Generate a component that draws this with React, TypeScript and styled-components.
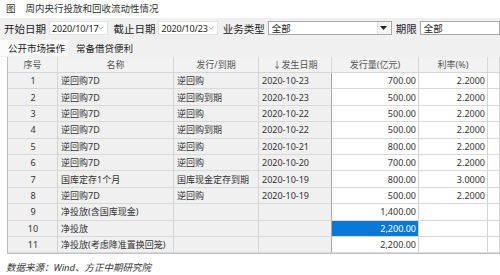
import React from 'react';
import styled, { createGlobalStyle } from 'styled-components';

const GlobalStyle = createGlobalStyle`
  html, body {
    margin: 0;
    padding: 0;
    background: #fff;
  }
  body {
    width: 500px;
    height: 275px;
    overflow: hidden;
    font-family: "Noto Sans", "Noto Sans CJK SC", sans-serif;
    color: #333;
  }
`;

const COLUMNS = '50px 116px 85px 73px 87px 69px 1fr';

const Page = styled.div`
  display: flex;
  flex-direction: column;
  width: 500px;
`;

const Title = styled.div`
  height: 18px;
  display: flex;
  align-items: center;
  gap: 10px;
  padding-left: 6px;
  padding-bottom: 3px;
  box-sizing: border-box;
  font-size: 9.5px;
  color: #333;
`;

const Toolbar = styled.div`
  height: 20px;
  display: flex;
  align-items: center;
  background: #f0f0f0;
  padding-left: 4px;
  font-size: 10.5px;
  color: #222;
`;

const Label = styled.span`
  margin-right: 3px;
  white-space: nowrap;
`;

const DateBox = styled.div`
  width: 64px;
  height: 14px;
  box-sizing: border-box;
  background: #fff;
  border: 1px solid #e2e2e2;
  display: flex;
  align-items: center;
  justify-content: space-between;
  padding: 0 3px 0 2px;
  font-size: 9px;
  letter-spacing: -0.15px;
  margin-right: 5px;
  white-space: nowrap;
`;

const SelectBox = styled.div<{ $width: number }>`
  width: ${(p) => p.$width}px;
  height: 14px;
  box-sizing: border-box;
  background: #fff;
  border: 1px solid #a8a8a8;
  display: flex;
  align-items: center;
  font-size: 9.5px;
  margin-right: 4px;
  flex-shrink: 0;
`;

const SelectText = styled.span`
  flex: 1;
  padding-left: 3px;
`;

const DropButton = styled.span`
  width: 12px;
  height: 100%;
  display: flex;
  align-items: center;
  justify-content: center;
  background: #f4f4f4;
  border-left: 1px solid #e0e0e0;
  margin-right: 1px;
`;

const Tabs = styled.div`
  height: 19px;
  display: flex;
  align-items: center;
  background: #f0f0f0;
  font-size: 9.5px;
  color: #222;
`;

const Tab = styled.span<{ $active?: boolean }>`
  height: 16px;
  display: flex;
  align-items: center;
  padding: 0 3px 0 8px;
  background: ${(p) => (p.$active ? '#fbfbfb' : 'transparent')};
`;

const Grid = styled.div`
  margin-left: 7px;
  border-left: 1px solid #bdbdbd;
  border-bottom: 1px solid #c4c4c4;
  width: 493px;
  box-sizing: border-box;
`;

const HeaderRow = styled.div`
  display: grid;
  grid-template-columns: ${COLUMNS};
  height: 15px;
  background: #f2f2f2;
  border-bottom: 1px solid #d6d6d6;
  font-size: 9px;
  color: #555;
`;

const HeadCell = styled.div`
  display: flex;
  align-items: center;
  justify-content: center;
  border-right: 1px solid #d8d8d8;
  white-space: nowrap;
`;

const Row = styled.div`
  display: grid;
  grid-template-columns: ${COLUMNS};
  height: 16.4px;
  font-size: 9px;
  color: #333;
`;

type Align = 'left' | 'center' | 'right';

const Cell = styled.div<{ $align?: Align; $kind?: 'gray' | 'white' | 'selected'; $edge?: string }>`
  display: flex;
  align-items: center;
  justify-content: ${(p) =>
    p.$align === 'center' ? 'center' : p.$align === 'right' ? 'flex-end' : 'flex-start'};
  padding: 0 2px 0 3px;
  background: ${(p) =>
    p.$kind === 'selected' ? '#0a78d6' : p.$kind === 'white' ? '#fff' : '#f0f0f0'};
  color: ${(p) => (p.$kind === 'selected' ? '#fff' : 'inherit')};
  border-right: 1px solid ${(p) => p.$edge ?? '#d4d4d4'};
  border-bottom: 1px solid #d9d9d9;
  white-space: nowrap;
  overflow: hidden;
`;

const Footnote = styled.div`
  padding: 6px 0 0 6px;
  font-size: 9.5px;
  font-style: italic;
  color: #333;
`;

const Chevron = () => (
  <svg width="6" height="4" viewBox="0 0 6 4">
    <path d="M0.5 0.8 L3 3.2 L5.5 0.8" fill="none" stroke="#999" strokeWidth="0.9" />
  </svg>
);

const Triangle = () => (
  <svg width="7" height="4" viewBox="0 0 7 4">
    <path d="M0 0 H7 L3.5 4 Z" fill="#222" />
  </svg>
);

interface Operation {
  no: number;
  name: string;
  kind: string;
  date: string;
  amount: string;
  rate: string;
  selected?: boolean;
}

const rows: Operation[] = [
  { no: 1, name: '逆回购7D', kind: '逆回购', date: '2020-10-23', amount: '700.00', rate: '2.2000' },
  { no: 2, name: '逆回购7D', kind: '逆回购到期', date: '2020-10-23', amount: '500.00', rate: '2.2000' },
  { no: 3, name: '逆回购7D', kind: '逆回购', date: '2020-10-22', amount: '500.00', rate: '2.2000' },
  { no: 4, name: '逆回购7D', kind: '逆回购到期', date: '2020-10-22', amount: '500.00', rate: '2.2000' },
  { no: 5, name: '逆回购7D', kind: '逆回购', date: '2020-10-21', amount: '800.00', rate: '2.2000' },
  { no: 6, name: '逆回购7D', kind: '逆回购', date: '2020-10-20', amount: '700.00', rate: '2.2000' },
  { no: 7, name: '国库定存1个月', kind: '国库现金定存到期', date: '2020-10-19', amount: '800.00', rate: '3.0000' },
  { no: 8, name: '逆回购7D', kind: '逆回购', date: '2020-10-19', amount: '500.00', rate: '2.2000' },
  { no: 9, name: '净投放(含国库现金)', kind: '', date: '', amount: '1,400.00', rate: '' },
  { no: 10, name: '净投放', kind: '', date: '', amount: '2,200.00', rate: '', selected: true },
  { no: 11, name: '净投放(考虑降准置换回笼)', kind: '', date: '', amount: '2,200.00', rate: '' },
];

const headers = ['序号', '名称', '发行/到期', '↓发生日期', '发行量(亿元)', '利率(%)', ''];

export default function App() {
  return (
    <Page>
      <GlobalStyle />
      <Title>
        <span>图</span>
        <span>周内央行投放和回收流动性情况</span>
      </Title>
      <Toolbar>
        <Label>开始日期</Label>
        <DateBox>
          <span>2020/10/17</span>
          <Chevron />
        </DateBox>
        <Label>截止日期</Label>
        <DateBox>
          <span>2020/10/23</span>
          <Chevron />
        </DateBox>
        <Label>业务类型</Label>
        <SelectBox $width={124}>
          <SelectText>全部</SelectText>
          <DropButton>
            <Triangle />
          </DropButton>
        </SelectBox>
        <Label>期限</Label>
        <SelectBox $width={80}>
          <SelectText>全部</SelectText>
        </SelectBox>
      </Toolbar>
      <Tabs>
        <Tab $active>公开市场操作</Tab>
        <Tab>常备借贷便利</Tab>
      </Tabs>
      <Grid>
        <HeaderRow>
          {headers.map((h, i) => (
            <HeadCell key={i}>{h}</HeadCell>
          ))}
        </HeaderRow>
        {rows.map((r) => (
          <Row key={r.no}>
            <Cell $align="center">{r.no}</Cell>
            <Cell>{r.name}</Cell>
            <Cell>{r.kind}</Cell>
            <Cell $edge="#a8a8a8">{r.date}</Cell>
            <Cell $align="right" $kind={r.selected ? 'selected' : 'white'} $edge="#c6d6e6">
              {r.amount}
            </Cell>
            <Cell $align="right" $kind="white">
              {r.rate}
            </Cell>
            <Cell $kind="white" />
          </Row>
        ))}
      </Grid>
      <Footnote>数据来源：Wind、方正中期研究院</Footnote>
    </Page>
  );
}
